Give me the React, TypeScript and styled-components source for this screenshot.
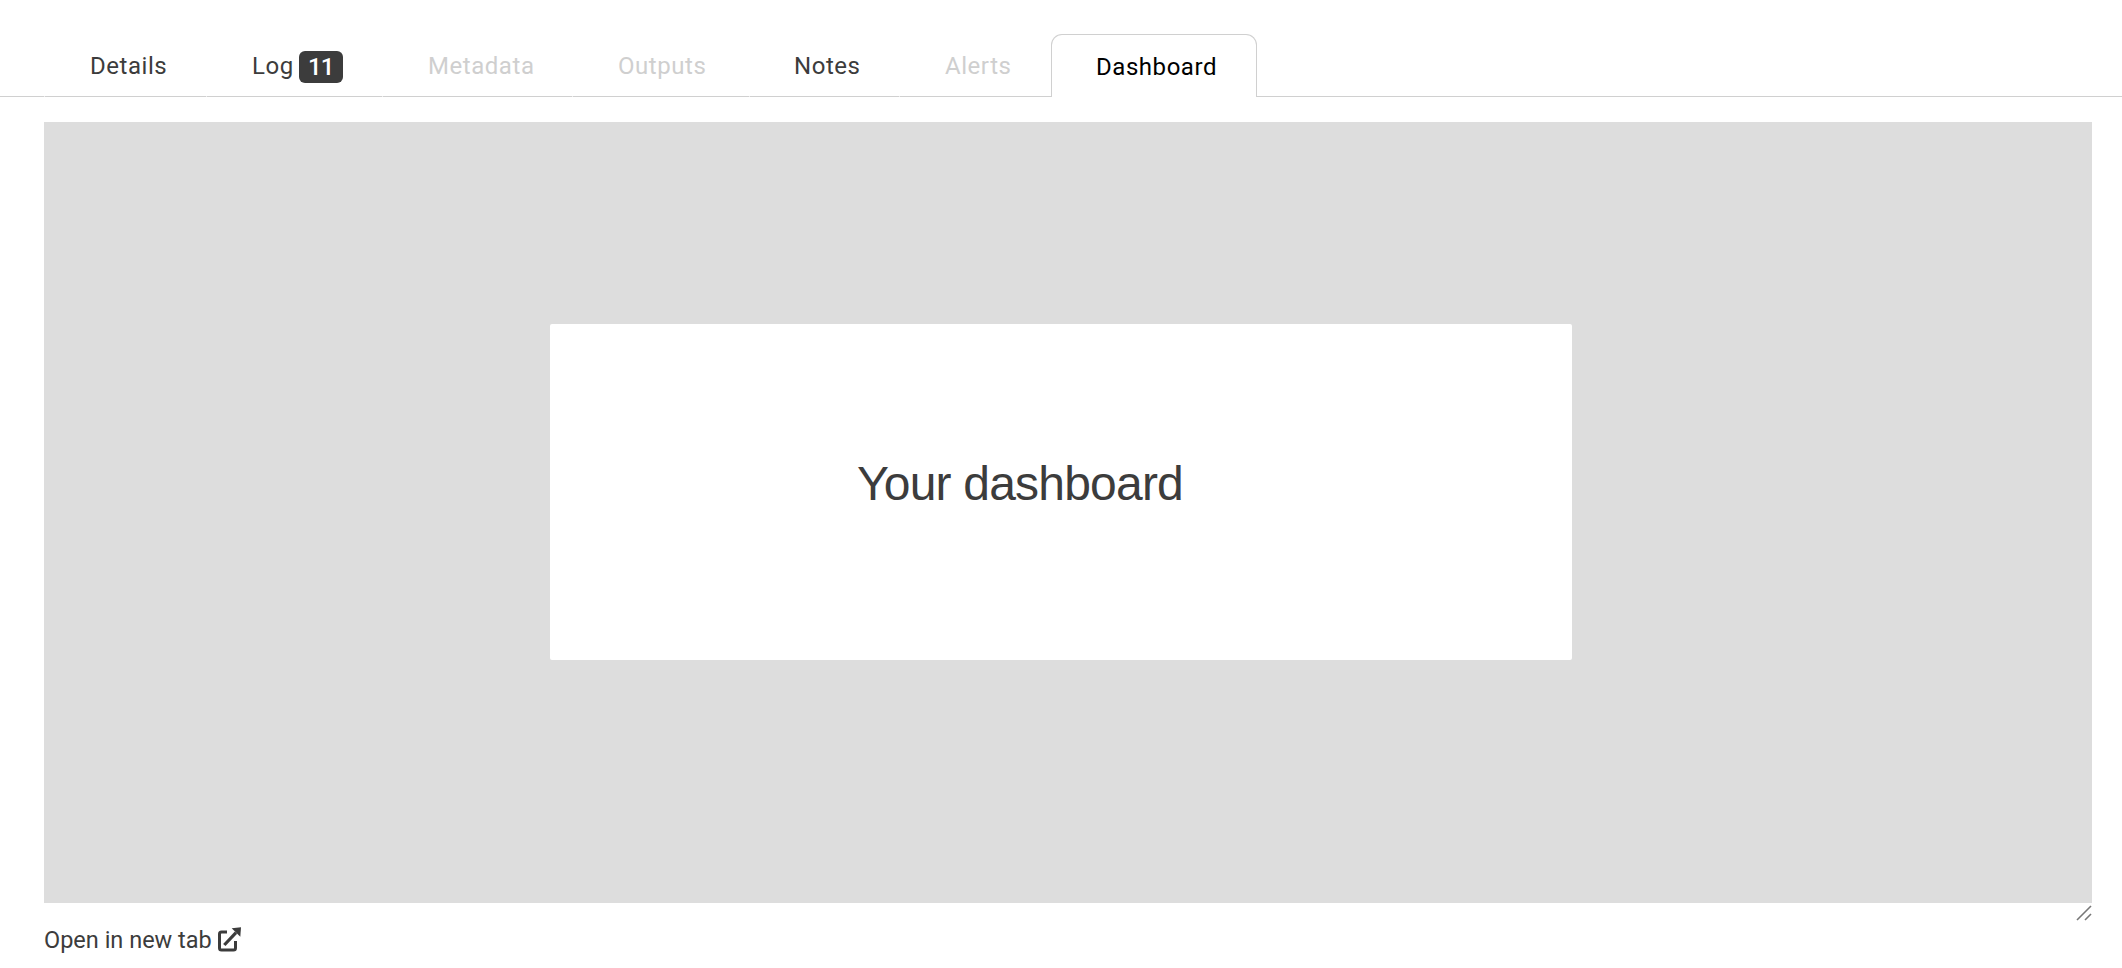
import React from "react";
import styled, { createGlobalStyle } from "styled-components";

const Global = createGlobalStyle`
  html, body { margin: 0; padding: 0; background: #fff; }
  body { font-family: "Roboto", "Liberation Sans", sans-serif; color: #3c3c3c; }
`;

const Page = styled.div`
  width: 2122px;
  height: 968px;
  overflow: hidden;
  display: flex;
  flex-direction: column;
  padding-top: 34px;
  box-sizing: border-box;
`;

const TabBar = styled.nav`
  display: flex;
  align-items: flex-end;
  height: 63px;
  padding-left: 44px;
  box-sizing: border-box;
  border-bottom: 1px solid #d0d0d0;
`;

const Tab = styled.div<{ $w: number; $pad?: number; $state?: "disabled" | "active" }>`
  position: relative;
  width: ${(p) => p.$w}px;
  height: ${(p) => (p.$state === "active" ? 63 : 62)}px;
  box-sizing: border-box;
  display: flex;
  align-items: center;
  gap: 5px;
  padding-top: 2px;
  font-family: "Roboto", "Inter", sans-serif;
  font-size: 24px;
  letter-spacing: 0.55px;
  padding-left: ${(p) => p.$pad ?? 46}px;
  color: ${(p) =>
    p.$state === "disabled" ? "#cfcfcf" : p.$state === "active" ? "#000" : "#3c3c3c"};
  ${(p) =>
    p.$state === "active"
      ? `
    margin-bottom: -1px;
    background: #fff;
    border: 1px solid #d0d0d0;
    border-bottom: none;
    border-radius: 11px 11px 0 0;
  `
      : `
    &::before {
      content: "";
      position: absolute;
      left: 0;
      bottom: -1px;
      width: 1px;
      height: 1px;
      background: #ececec;
    }
  `}
`;

const Badge = styled.span`
  width: 44px;
  height: 32px;
  margin-top: 1px;
  border-radius: 6px;
  background: #3c3c3c;
  color: #fff;
  display: flex;
  align-items: center;
  justify-content: center;
  font-size: 24px;
  font-weight: 500;
  letter-spacing: -1px;
`;

const Frame = styled.div`
  margin: 25px 30px 0 44px;
  height: 781px;
  background: #ddd;
  padding: 202px 520px 243px 506px;
  box-sizing: border-box;
  position: relative;
`;

const Card = styled.div`
  height: 100%;
  background: #fff;
  border-radius: 2px;
  padding: 131px 0 0 307px;
  box-sizing: border-box;
`;

const Heading = styled.div`
  font-family: "Liberation Sans", Arial, sans-serif;
  font-size: 48px;
  line-height: 58px;
  letter-spacing: -0.8px;
  color: #3c3c3c;
`;

const Grip = styled.svg`
  position: absolute;
  right: 0;
  top: 100%;
  width: 16px;
  height: 18px;
  margin-top: 2px;
`;

const Footer = styled.div`
  margin: 23px 0 0 44px;
  display: flex;
  align-items: center;
  gap: 5px;
  font-family: "Roboto", "Inter", sans-serif;
  font-size: 23.500px;
  color: #3c3c3c;
`;

const ExternalIcon = styled.svg`
  width: 24px;
  height: 25px;
  margin-top: -2px;
  flex: none;
`;

export default function App() {
  return (
    <Page>
      <Global />
      <TabBar>
        <Tab $w={162}>Details</Tab>
        <Tab $w={176}>
          Log <Badge>11</Badge>
        </Tab>
        <Tab $w={190} $state="disabled">Metadata</Tab>
        <Tab $w={177} $state="disabled">Outputs</Tab>
        <Tab $w={150} $pad={45}>Notes</Tab>
        <Tab $w={152} $state="disabled">Alerts</Tab>
        <Tab $w={206} $pad={44} $state="active">Dashboard</Tab>
      </TabBar>
      <Frame>
        <Card>
          <Heading>Your dashboard</Heading>
        </Card>
        <Grip viewBox="0 0 16 18" fill="none" stroke="#777" strokeWidth="1.6">
          <path d="M1 15 L15 1" />
          <path d="M9 15 L15 9" />
        </Grip>
      </Frame>
      <Footer>
        Open in new tab
        <ExternalIcon viewBox="0 0 24 25" fill="none" stroke="#3c3c3c" strokeWidth="3">
          <path d="M10 5H4.500a2 2 0 0 0-2 2V21a2 2 0 0 0 2 2H16.500a2 2 0 0 0 2-2V14" />
          <path d="M7.300 18L19 5.700" strokeWidth="3.200" />
          <path d="M14.700 1.300L24 .3L23.300 9.700Z" fill="#3c3c3c" stroke="none" />
        </ExternalIcon>
      </Footer>
    </Page>
  );
}
